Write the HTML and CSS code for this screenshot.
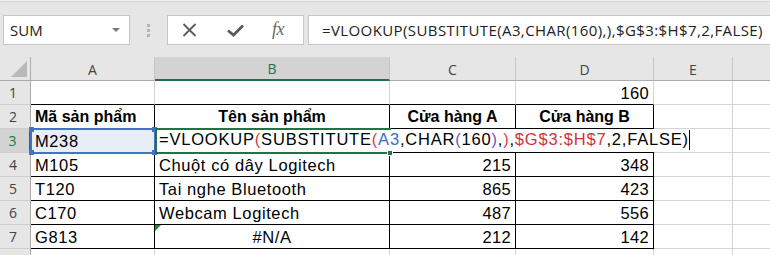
FILE: index.html
```html
<!DOCTYPE html>
<html lang="vi">
<head>
<meta charset="utf-8">
<title>Excel VLOOKUP</title>
<link rel="stylesheet" href="styles.css">
</head>
<body>
<div class="toolbar">
  <div class="namebox"><span class="nb-text">SUM</span><span class="caret"></span></div>
  <div class="grip"><i></i><i></i><i></i></div>
  <div class="fxbox">
    <svg class="ico-x" width="15" height="14" viewBox="0 0 15 14"><path d="M1.5 1 L13.5 13 M13.5 1 L1.5 13" stroke="#5a5a5a" stroke-width="1.8" fill="none"/></svg>
    <svg class="ico-ok" width="17" height="13" viewBox="0 0 17 13"><path d="M1 6.5 L6.5 11 L16 1.5" stroke="#5a5a5a" stroke-width="2.8" fill="none"/></svg>
    <span class="fx">fx</span>
  </div>
  <div class="formula">=VLOOKUP(SUBSTITUTE(A3,CHAR(160),),$G$3:$H$7,2,FALSE)</div>
</div>

<div class="sheet">
  <div class="corner"><svg width="16" height="16" viewBox="0 0 16 16"><polygon points="16,0 16,16 0,16" fill="#b9b9b9"/></svg></div>
  <div class="ch">A</div>
  <div class="ch active">B</div>
  <div class="ch">C</div>
  <div class="ch">D</div>
  <div class="ch">E</div>
  <div class="ch last"></div>

  <div class="rh">1</div>
  <div class="c b-bottom"></div>
  <div class="c b-bottom"></div>
  <div class="c b-bottom"></div>
  <div class="c b-bottom num">160</div>
  <div class="c"></div>
  <div class="c last"></div>

  <div class="rh">2</div>
  <div class="c t bold">Mã sản phẩm</div>
  <div class="c t bold center">Tên sản phẩm</div>
  <div class="c t bold center">Cửa hàng A</div>
  <div class="c t bold center">Cửa hàng B</div>
  <div class="c"></div>
  <div class="c last"></div>

  <div class="rh active">3</div>
  <div class="c t sel">M238</div>
  <div class="c t editing">
    <div class="editor">=VLOOKUP<span class="p2">(</span>SUBSTITUTE<span class="p2">(</span><span class="ref1">A3</span>,CHAR<span class="p3">(</span>160<span class="p3">)</span>,<span class="p2">)</span>,<span class="ref2">$G$3:$H$7</span>,2,FALSE)<span class="cursor"></span></div>
  </div>
  <div class="c t"></div>
  <div class="c t"></div>
  <div class="c"></div>
  <div class="c last"></div>

  <div class="rh">4</div>
  <div class="c t">M105</div>
  <div class="c t">Chuột có dây Logitech</div>
  <div class="c t num">215</div>
  <div class="c t num">348</div>
  <div class="c"></div>
  <div class="c last"></div>

  <div class="rh">5</div>
  <div class="c t">T120</div>
  <div class="c t">Tai nghe Bluetooth</div>
  <div class="c t num">865</div>
  <div class="c t num">423</div>
  <div class="c"></div>
  <div class="c last"></div>

  <div class="rh">6</div>
  <div class="c t">C170</div>
  <div class="c t">Webcam Logitech</div>
  <div class="c t num">487</div>
  <div class="c t num">556</div>
  <div class="c"></div>
  <div class="c last"></div>

  <div class="rh">7</div>
  <div class="c t">G813</div>
  <div class="c t center err">#N/A</div>
  <div class="c t num">212</div>
  <div class="c t num">142</div>
  <div class="c"></div>
  <div class="c last"></div>

  <div class="rh"></div>
  <div class="c"></div>
  <div class="c"></div>
  <div class="c"></div>
  <div class="c"></div>
  <div class="c"></div>
  <div class="c last"></div>

  <div class="hl-ref"><i class="h tl"></i><i class="h tr"></i><i class="h bl"></i><i class="h br"></i></div>
  <div class="hl-active"><i class="fill"></i></div>
</div>
</body>
</html>
```
FILE: styles.css
```css
* { box-sizing: border-box; }
html, body { margin: 0; padding: 0; }
body {
  width: 770px;
  height: 255px;
  overflow: hidden;
  background: #ffffff;
  font-family: "Liberation Sans", Arial, sans-serif;
}

/* ---------- toolbar ---------- */
.toolbar {
  height: 57px;
  display: flex;
  align-items: flex-start;
  padding-top: 15px;
  background: linear-gradient(#f0f0f0 0 1px, #d6d6d6 1px 2px, #e6e6e6 2px);
  font-family: "Open Sans", "Noto Sans", sans-serif;
}
.namebox {
  margin-left: 3px;
  width: 127px;
  height: 30px;
  background: #fff;
  border: 1px solid #c6c6c6;
  display: flex;
  align-items: center;
  justify-content: space-between;
  padding: 0 9px 0 6px;
  font-size: 15px;
  color: #222;
}
.caret {
  width: 0; height: 0;
  border-left: 4px solid transparent;
  border-right: 4px solid transparent;
  border-top: 4px solid #7a7a7a;
}
.grip {
  width: 37px;
  height: 30px;
  display: flex;
  flex-direction: column;
  align-items: center;
  justify-content: center;
  gap: 2px;
  padding-right: 1px;
}
.grip i {
  display: block;
  width: 3px;
  height: 3px;
  background: #b5b5b5;
}
.fxbox {
  width: 137px;
  height: 30px;
  background: #fff;
  border: 1px solid #c6c6c6;
  display: flex;
  align-items: center;
  padding-left: 14px;
  gap: 0;
}
.ico-x { margin-right: 30px; }
.ico-ok { margin-right: 28px; margin-top: 1px; }
.fx {
  font-family: "Liberation Serif", serif;
  font-style: italic;
  font-size: 18px;
  color: #6a6a6a;
  letter-spacing: -0.5px;
  margin-top: -2px;
}
.formula {
  margin-left: 4px;
  flex: 1;
  height: 30px;
  background: #fff;
  border: 1px solid #c6c6c6;
  border-right: none;
  padding-left: 13px;
  font-size: 15px;
  letter-spacing: 0.4px;
  line-height: 28px;
  color: #222;
  white-space: nowrap;
  overflow: hidden;
}

/* ---------- sheet ---------- */
.sheet {
  position: relative;
  display: grid;
  grid-template-columns: 31px 124px 235px 126px 138px 79px 1fr;
  grid-auto-rows: 24px;
}
.corner, .ch, .rh {
  background: #e6e6e6;
  font-family: "Open Sans", "Noto Sans", sans-serif;
  font-size: 14px;
  color: #444;
  display: flex;
  align-items: center;
  justify-content: center;
}
.corner {
  border-right: 1px solid #ababab;
  border-bottom: 1px solid #ababab;
  align-items: flex-end;
  justify-content: flex-end;
  padding: 0 3px 3px 0;
}
.corner svg { display: block; }
.ch {
  border-right: 1px solid #c6c6c6;
  border-bottom: 1px solid #ababab;
  padding-top: 1px;
}
.ch.last { border-right: none; }
.ch.active {
  background: #d3d3d3;
  color: #217346;
  border-bottom: 2px solid #217346;
}
.rh {
  border-right: 1px solid #ababab;
  border-bottom: 1px solid #cfcfcf;
  padding-right: 4px;
}
.rh.active {
  background: #d3d3d3;
  color: #217346;
  border-right: 2px solid #217346;
}
.c {
  border-right: 1px solid #d4d4d4;
  border-bottom: 1px solid #d4d4d4;
  font-size: 16.5px;
  letter-spacing: 0.6px;
  color: #000;
  line-height: 20px;
  padding: 2px 4px 0 4px;
  white-space: nowrap;
  position: relative;
}
.c.last { border-right: none; }
.c.b-bottom { border-bottom-color: #000; }
.c.t { border-right-color: #000; border-bottom-color: #000; }
.c.num { text-align: right; padding-right: 4px; letter-spacing: 0.3px; }
.c.center { text-align: center; }
.c.bold { font-weight: bold; font-size: 16px; letter-spacing: 0; }
.c.sel { background: #e8eef8; }
.c.err::before {
  content: "";
  position: absolute;
  left: 0;
  top: 0;
  border-top: 6px solid #1d8a3c;
  border-right: 6px solid transparent;
}
.c.editing { z-index: 2; overflow: visible; padding: 0; }
.editor {
  position: absolute;
  left: 1px;
  top: 0;
  height: 23px;
  width: 545px;
  background: #fff;
  padding-left: 3px;
  line-height: 20px;
  letter-spacing: 0.8px;
  white-space: nowrap;
  display: flex;
  align-items: flex-start;
}
.p2 { color: #d9423b; }
.p3 { color: #7a4fc0; }
.ref1 { color: #3a6cc8; }
.ref2 { color: #d13438; }
.cursor {
  display: inline-block;
  width: 1px;
  height: 20px;
  background: #000;
  margin-left: 0;
  margin-top: 1px;
}

/* selection overlays */
.hl-ref {
  position: absolute;
  left: 30px;
  top: 71px;
  width: 126px;
  height: 26px;
  border: 2px solid #4472c4;
  z-index: 3;
}
.hl-ref .h {
  position: absolute;
  width: 5px;
  height: 5px;
  background: #4472c4;
}
.hl-ref .tl { left: -3px; top: -3px; }
.hl-ref .tr { right: -3px; top: -3px; }
.hl-ref .bl { left: -3px; bottom: -3px; }
.hl-ref .br { right: -3px; bottom: -3px; }
.hl-active {
  position: absolute;
  left: 155px;
  top: 71px;
  width: 236px;
  height: 26px;
  border: 2px solid #217346;
  border-right: none;
  z-index: 3;
}
.hl-active .fill {
  position: absolute;
  right: -2px;
  bottom: -4px;
  width: 6px;
  height: 6px;
  background: #217346;
  border: 1px solid #fff;
}
```
